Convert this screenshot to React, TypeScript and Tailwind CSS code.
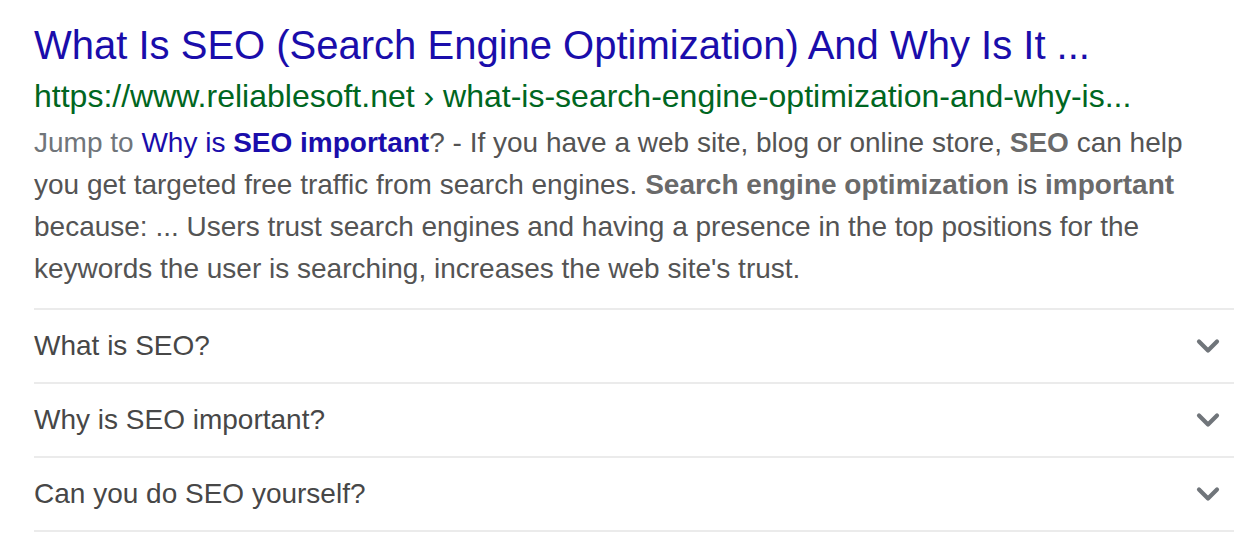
import { ChevronDown } from 'lucide-react';

const questions = ['What is SEO?', 'Why is SEO important?', 'Can you do SEO yourself?'];

export default function App() {
  return (
    <div
      className="min-h-screen w-full bg-white pl-[34px] pr-[22px] pt-[21px]"
      style={{ fontFamily: '"Liberation Sans", Arial, sans-serif' }}
    >
      {/* Title */}
      <h3 className="text-[40px] leading-[48px] text-[#1a0dab] whitespace-nowrap">
        What Is SEO (Search Engine Optimization) And Why Is It ...
      </h3>
      {/* URL */}
      <div className="mt-[7px] text-[32px] leading-[40px] text-[#006621] whitespace-nowrap">
        https://www.reliablesoft.net › what-is-search-engine-optimization-and-why-is...
      </div>
      {/* Snippet */}
      <p className="mt-[6px] text-[28px] leading-[42px] text-[#545454]">
        <span className="text-[#70757a]">Jump to </span>
        <span className="text-[#1a0dab]">
          Why is <b>SEO important</b>
        </span>
        ? - If you have a web site, blog or online store, <b className="text-[#6a6a6a]">SEO</b> can help you get
        targeted free traffic from search engines. <b className="text-[#6a6a6a]">Search engine optimization</b> is{' '}
        <b className="text-[#6a6a6a]">important</b> because: ... Users trust search engines and having a presence in the
        top positions for the keywords the user is searching, increases the web site's trust.
      </p>
      {/* Accordion rows */}
      <div className="mt-[18px] border-t-2 border-[#ebebeb]">
        {questions.map((q) => (
          <div key={q} className="flex h-[74px] items-center justify-between border-b-2 border-[#ebebeb]">
            <span className="text-[28px] text-[#474747]">{q}</span>
            <ChevronDown className="mr-[8px] h-[36px] w-[36px] text-[#70757a]" strokeWidth={2.8} />
          </div>
        ))}
      </div>
    </div>
  );
}
